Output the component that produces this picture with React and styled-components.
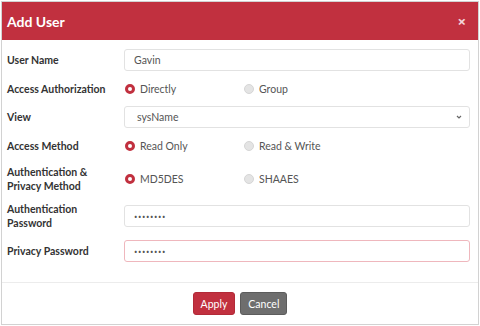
import React from 'react'
import styled, { createGlobalStyle } from 'styled-components'

const GlobalStyle = createGlobalStyle`
  body {
    margin: 0;
    background: #fff;
    font-family: Lato, "Noto Sans", Arial, sans-serif;
  }
`

const Page = styled.div`
  padding: 1px;
  width: 480px;
  box-sizing: border-box;
`

const Modal = styled.div`
  border: 1px solid #d2d2d2;
  height: 324px;
  box-sizing: border-box;
  display: flex;
  flex-direction: column;
`

const Header = styled.div`
  background: #c1303f;
  height: 38px;
  display: flex;
  align-items: center;
  justify-content: space-between;
  padding: 0 12px 0 5px;
  color: #fff;
`

const Title = styled.h1`
  margin: 0;
  font-size: 14px;
  font-weight: 700;
`

const Close = styled.span`
  font-family: "Noto Sans", sans-serif;
  font-size: 15px;
  font-weight: 700;
  line-height: 1;
  color: #f3d6da;
`

const Body = styled.div`
  flex: 1;
  padding: 9px 8px 0 5px;
  border-bottom: 1px solid #ececec;
`

const Row = styled.div`
  display: grid;
  grid-template-columns: 117px 1fr;
  align-items: center;
  min-height: ${(p) => p.h || 22}px;
  margin-top: ${(p) => p.gap || 0}px;
`

const Label = styled.label`
  font-size: 10.5px;
  font-weight: 700;
  color: #333;
  line-height: 14px;
`

const Input = styled.input`
  height: 22px;
  box-sizing: border-box;
  border: 1px solid ${(p) => (p.invalid ? '#efb7bd' : '#e2e2e2')};
  border-radius: 3px;
  padding: 0 9px;
  font-family: ${(p) => (p.type === 'password' ? '"Noto Sans", sans-serif' : 'inherit')};
  font-size: ${(p) => (p.type === 'password' ? '9px' : '10.5px')};
  letter-spacing: ${(p) => (p.type === 'password' ? '0.6px' : '0')};
  color: #555;
  outline: none;
  width: 100%;
`

const SelectBox = styled.div`
  height: 22px;
  box-sizing: border-box;
  border: 1px solid #e2e2e2;
  border-radius: 3px;
  padding: 0 7px 0 12px;
  display: flex;
  align-items: center;
  justify-content: space-between;
  font-size: 10.5px;
  color: #555;
`

const RadioGroup = styled.div`
  display: flex;
`

const Option = styled.div`
  width: 118px;
  display: flex;
  align-items: center;
  gap: 5px;
  font-size: 10.5px;
  color: #555;
  padding-left: 1px;
`

const Dot = styled.span`
  width: 10px;
  height: 10px;
  border-radius: 50%;
  box-sizing: border-box;
  border: ${(p) => (p.on ? '3px solid #c1303f' : '1px solid #d6d6d6')};
  background: ${(p) => (p.on ? '#fff' : '#e4e4e4')};
`

const Footer = styled.div`
  display: flex;
  justify-content: center;
  gap: 5px;
  padding: 9px 0 9px;
`

const Button = styled.button`
  height: 23px;
  padding: 0 7px;
  border-radius: 3px;
  font-family: inherit;
  font-size: 10.5px;
  color: #fff;
  background: ${(p) => (p.secondary ? '#6e6e6e' : '#c1303f')};
  border: 1px solid ${(p) => (p.secondary ? '#5c5c5c' : '#b22a38')};
`

const Radios = ({ options, value }) => (
  <RadioGroup>
    {options.map((o) => (
      <Option key={o}>
        <Dot on={o === value} />
        {o}
      </Option>
    ))}
  </RadioGroup>
)

const Chevron = () => (
  <svg width="6" height="4" viewBox="0 0 6 4">
    <path d="M1 1l2 2 2-2" fill="none" stroke="#666" strokeWidth="1.2" />
  </svg>
)

export default function App() {
  return (
    <Page>
      <GlobalStyle />
      <Modal>
        <Header>
          <Title>Add User</Title>
          <Close>×</Close>
        </Header>
        <Body>
          <Row>
            <Label>User Name</Label>
            <Input defaultValue="Gavin" />
          </Row>
          <Row gap={7}>
            <Label>Access Authorization</Label>
            <Radios options={['Directly', 'Group']} value="Directly" />
          </Row>
          <Row gap={6}>
            <Label>View</Label>
            <SelectBox>
              sysName
              <Chevron />
            </SelectBox>
          </Row>
          <Row gap={7}>
            <Label>Access Method</Label>
            <Radios options={['Read Only', 'Read & Write']} value="Read Only" />
          </Row>
          <Row gap={8} h={26}>
            <Label>
              Authentication &amp;
              <br />
              Privacy Method
            </Label>
            <Radios options={['MD5DES', 'SHAAES']} value="MD5DES" />
          </Row>
          <Row gap={9} h={28}>
            <Label>
              Authentication
              <br />
              Password
            </Label>
            <Input type="password" defaultValue="12345678" />
          </Row>
          <Row gap={10}>
            <Label>Privacy Password</Label>
            <Input type="password" defaultValue="12345678" invalid />
          </Row>
        </Body>
        <Footer>
          <Button>Apply</Button>
          <Button secondary>Cancel</Button>
        </Footer>
      </Modal>
    </Page>
  )
}
